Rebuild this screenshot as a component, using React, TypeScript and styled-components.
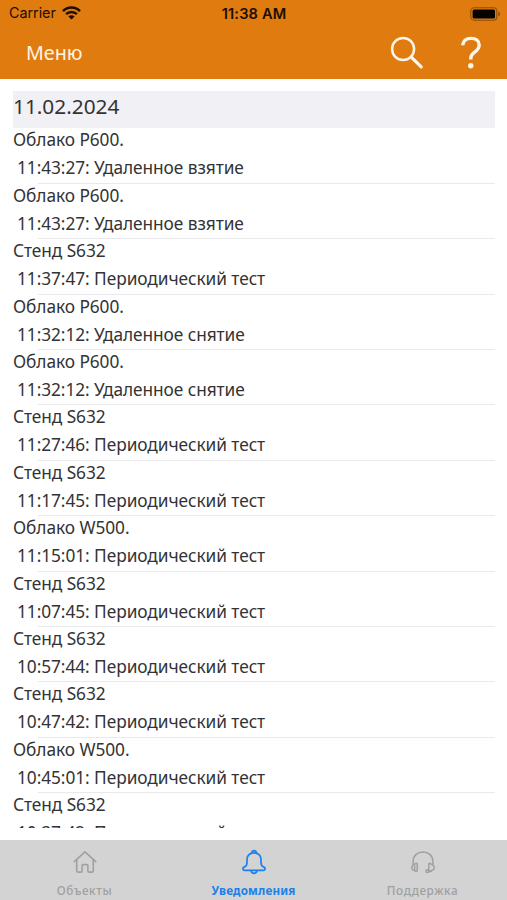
import React from "react";
import styled, { createGlobalStyle } from "styled-components";

const GlobalStyle = createGlobalStyle`
  * { box-sizing: border-box; }
  body { margin: 0; background: #fff; }
`;

const Screen = styled.div`
  display: flex;
  flex-direction: column;
  width: 507px;
  height: 900px;
  overflow: hidden;
  background: #fff;
  font-family: "Noto Sans", sans-serif;
`;

const Header = styled.header`
  flex: none;
  height: 79px;
  background: #df7b0f;
`;

const StatusBar = styled.div`
  display: grid;
  grid-template-columns: 1fr auto 1fr;
  align-items: center;
  height: 27px;
  padding: 0 8px 0 9px;
  font-family: Inter, sans-serif;
  font-size: 14.4px;
  line-height: 27px;
  color: #1c0e02;
`;

const Carrier = styled.div`
  display: flex;
  align-items: center;
  gap: 6px;
  height: 26px;
  line-height: 26px;
  letter-spacing: -0.05px;
  margin-bottom: 2px;
`;

const Clock = styled.div`
  padding-top: 1px;
  font-size: 14.6px;
  font-weight: 600;
  letter-spacing: 0.15px;
`;

const BatterySlot = styled.div`
  display: flex;
  justify-content: flex-end;
  margin-right: -2px;
`;

const NavBar = styled.div`
  display: flex;
  align-items: center;
  height: 52px;
  padding: 0 25px 0 26px;
`;

const MenuButton = styled.button`
  margin: 0 auto 0 0;
  padding: 0 0 1px;
  border: 0;
  background: none;
  color: #fff4e2;
  font: 19.7px/28px "Noto Sans", sans-serif;
`;

const IconButton = styled.button<{ $gap?: number }>`
  display: block;
  margin-left: ${(p) => p.$gap ?? 0}px;
  padding: 0;
  border: 0;
  background: none;
  color: #fff6e8;
  svg { display: block; }
`;

const List = styled.main`
  flex: none;
  height: 737px;
  margin: 12px 12px 12px 13px;
  overflow: hidden;
  color: #333335;
`;

const DateHeading = styled.h2`
  height: 37.4px;
  margin: 0;
  background: #f1f0f5;
  font-size: 20.8px;
  font-weight: 400;
  line-height: 30px;
`;

const Entry = styled.article`
  display: flex;
  flex-direction: column;
  height: 55.4px;
  font-size: 17.3px;
  letter-spacing: -0.06px;
`;

const ObjectName = styled.div`
  height: 27px;
  line-height: 24px;
`;

const EventText = styled.div`
  flex: 1;
  padding-left: 4px;
  line-height: 26px;
  white-space: nowrap;
`;

const Divider = styled.div`
  height: 1px;
  margin-left: 25px;
  background: #e9e9eb;
`;

const TabBar = styled.nav`
  display: grid;
  grid-template-columns: repeat(3, 1fr);
  flex: none;
  height: 60px;
  background: #d3d3d3;
`;

const Tab = styled.a<{ $active?: boolean }>`
  display: flex;
  flex-direction: column;
  align-items: center;
  padding-top: 9px;
  color: ${(p) => (p.$active ? "#1c80ed" : "#a0a0a0")};
  font-size: 11.7px;
  font-weight: ${(p) => (p.$active ? 700 : 500)};
  letter-spacing: ${(p) => (p.$active ? 0.15 : 0.6)}px;
  line-height: 18px;
  svg { display: block; margin-bottom: 6px; }
`;

const entries: [string, string, string][] = [
  ["Облако P600.", "11:43:27", "Удаленное взятие"],
  ["Облако P600.", "11:43:27", "Удаленное взятие"],
  ["Стенд S632", "11:37:47", "Периодический тест"],
  ["Облако P600.", "11:32:12", "Удаленное снятие"],
  ["Облако P600.", "11:32:12", "Удаленное снятие"],
  ["Стенд S632", "11:27:46", "Периодический тест"],
  ["Стенд S632", "11:17:45", "Периодический тест"],
  ["Облако W500.", "11:15:01", "Периодический тест"],
  ["Стенд S632", "11:07:45", "Периодический тест"],
  ["Стенд S632", "10:57:44", "Периодический тест"],
  ["Стенд S632", "10:47:42", "Периодический тест"],
  ["Облако W500.", "10:45:01", "Периодический тест"],
  ["Стенд S632", "10:37:42", "Периодический тест"],
];

const WifiIcon = () => (
  <svg width="19" height="14" viewBox="0 0 19 14" fill="none" stroke="currentColor" strokeWidth="2.5">
    <path d="M1 5.1C5.7.3 13.3.3 18 5.1M4.1 8.2c3-3 7.8-3 10.8 0" />
    <path d="M9.5 13.6 6.4 10.6c1.8-1.7 4.4-1.7 6.2 0Z" fill="currentColor" stroke="none" />
  </svg>
);

const BatteryIcon = () => (
  <svg width="31" height="14" viewBox="0 0 31 14">
    <rect x=".8" y=".8" width="26" height="12.4" rx="3.4" fill="none" stroke="#8f4e0a" strokeWidth="1.1" />
    <rect x="2.6" y="2.4" width="22.4" height="9.2" rx="1.5" fill="#050200" />
    <path d="M28.4 4.6v4.8c2.2-.8 2.2-4 0-4.8Z" fill="#8f4e0a" />
  </svg>
);

const SearchIcon = () => (
  <svg width="34" height="34" viewBox="0 0 34 34" fill="none" stroke="currentColor" strokeLinecap="round">
    <circle cx="13.1" cy="13" r="11" strokeWidth="2.5" />
    <path d="m21.3 21.2 9.9 9.7" strokeWidth="3.2" />
  </svg>
);

const HelpIcon = () => (
  <svg width="22" height="34" viewBox="0 0 22 34" fill="none" stroke="currentColor" strokeWidth="3.4">
    <path d="M2.6 9.3C3.3 4.8 6.5 2.4 11 2.4c4.8 0 8.2 2.6 8.2 6.6 0 3.2-1.6 5-4.6 7.2-3 2.1-3.8 3.5-3.8 6.2v1" />
    <circle cx="10.8" cy="29.7" r="2.7" fill="currentColor" stroke="none" />
  </svg>
);

const HomeIcon = () => (
  <svg width="26" height="26" viewBox="0 0 26 26" fill="none" stroke="currentColor" strokeWidth="1.6" strokeLinejoin="round" strokeLinecap="round">
    <path d="M2.3 12.7 13 2.8l10.7 9.9" />
    <path d="M4.7 11.2v10.6c0 .9.4 1.3 1.2 1.3h3c.8 0 1.2-.4 1.2-1.2v-5.1c0-.8.4-1.2 1.2-1.2h3.4c.8 0 1.2.4 1.2 1.2v5.1c0 .8.4 1.2 1.2 1.2h3c.8 0 1.2-.4 1.2-1.3V11.2" />
  </svg>
);

const BellIcon = () => (
  <svg width="26" height="26" viewBox="0 0 26 26" fill="none" stroke="currentColor" strokeWidth="1.7" strokeLinejoin="round">
    <path d="M10.9 4.1C7.6 5 6 7.4 6 10.8v2.6c0 2.6-.7 3.6-2.6 4.5-2.3 1-1.8 3.5.5 3.5h18.2c2.3 0 2.8-2.5.5-3.5-1.9-.9-2.6-1.9-2.6-4.5v-2.6c0-3.4-1.6-5.8-4.9-6.7" />
    <path d="M10.6 4.3c0-3.6 4.8-3.6 4.8 0-1.5-.5-3.3-.5-4.8 0ZM10.1 21.6c.4 3.6 5.4 3.6 5.8 0" />
  </svg>
);

const HeadsetIcon = () => (
  <svg width="26" height="26" viewBox="0 0 26 26" fill="none" stroke="currentColor" strokeWidth="1.5" strokeLinejoin="round" strokeLinecap="round">
    <path d="M3.1 15.5v-2.7c0-13.2 19.8-13.2 19.8 0v2.7" />
    <path d="m6 14.4-2.8 1.7c-1.8 1.2-2 3.3-.3 4.7l3.2 1.6c.8.2 1.1-.2 1.1-.8v-6.3c0-.8-.5-1.2-1.2-.9ZM20 14.4l2.8 1.7c1.8 1.2 2 3.3.3 4.7l-3.2 1.6c-.8.2-1.1-.2-1.1-.8v-6.3c0-.8.5-1.2 1.2-.9Z" />
    <path d="M4.7 17v3.5M21.6 21.7c-.6.7-1.5 1-2.6 1" /><circle cx="17.3" cy="22.2" r="1.4" />
  </svg>
);

export default function App() {
  return (
    <>
      <GlobalStyle />
      <Screen>
        <Header>
          <StatusBar>
            <Carrier>Carrier <WifiIcon /></Carrier>
            <Clock>11:38 AM</Clock>
            <BatterySlot><BatteryIcon /></BatterySlot>
          </StatusBar>
          <NavBar>
            <MenuButton>Меню</MenuButton>
            <IconButton aria-label="Поиск"><SearchIcon /></IconButton>
            <IconButton $gap={36} aria-label="Справка"><HelpIcon /></IconButton>
          </NavBar>
        </Header>
        <List>
          <DateHeading>11.02.2024</DateHeading>
          {entries.map(([name, time, text], i) => (
            <Entry key={i}>
              <ObjectName>{name}</ObjectName>
              <EventText>{time}: {text}</EventText>
              <Divider />
            </Entry>
          ))}
        </List>
        <TabBar>
          <Tab><HomeIcon />Объекты</Tab>
          <Tab $active><BellIcon />Уведомления</Tab>
          <Tab><HeadsetIcon />Поддержка</Tab>
        </TabBar>
      </Screen>
    </>
  );
}
